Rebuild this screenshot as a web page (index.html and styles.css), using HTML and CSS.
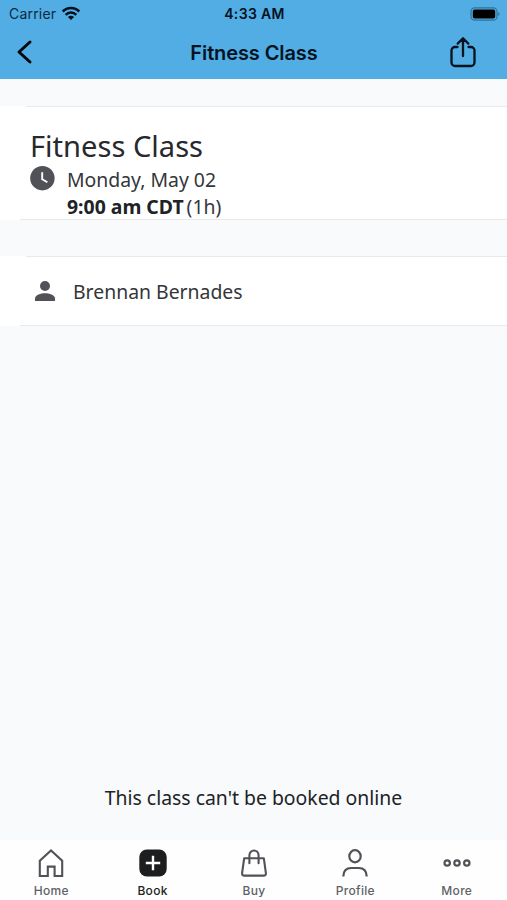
FILE: index.html
```html
<!DOCTYPE html>
<html lang="en">
<head>
<meta charset="utf-8">
<title>Fitness Class</title>
<link rel="stylesheet" href="styles.css">
</head>
<body>
<div class="app">
  <header class="header">
    <div class="status">
      <div class="carrier"><span>Carrier</span>
        <svg width="20" height="16" viewBox="0 0 20 16" fill="none" stroke="#02111d" stroke-width="2.6"><path d="M1.700 5.500C6.300.8 13.700.8 18.300 5.500M4.700 8.800c3-3 7.600-3 10.600 0"/><path d="M6.900 10.900c1.800-1.700 4.400-1.700 6.200 0L10 14z" fill="#02111d" stroke="none"/></svg>
      </div>
      <div class="time">4:33 AM</div>
      <svg class="battery" width="30" height="14" viewBox="0 0 30 14"><rect x="1" y=".8" width="26" height="12.400" rx="3.800" fill="none" stroke="#347197" stroke-width="1.200"/><rect x="2.800" y="2.600" width="22.400" height="8.800" rx="2" fill="#000"/><path d="M28.200 5v4c1.700-.6 1.700-3.400 0-4z" fill="#347197"/></svg>
    </div>
    <nav class="navbar">
      <svg class="back" width="18" height="26" viewBox="0 0 18 26" fill="none" stroke="#04090d" stroke-width="3" stroke-linecap="round" stroke-linejoin="round"><path d="M14 3 3 13l11 10"/></svg>
      <h1>Fitness Class</h1>
      <svg class="share" width="28" height="32" viewBox="0 0 28 32" fill="none" stroke="#04131e" stroke-width="2.300" stroke-linecap="round" stroke-linejoin="round"><path d="M8.500 11H6a3.500 3.500 0 0 0-3.500 3.500v12A3.500 3.500 0 0 0 6 30h16a3.500 3.500 0 0 0 3.500-3.500v-12A3.500 3.500 0 0 0 22 11h-2.500M14 20V3M8.700 7.600 14 2.300l5.300 5.300"/></svg>
    </nav>
  </header>
  <main class="content">
    <section class="card summary">
      <h2>Fitness Class</h2>
      <div class="when">
        <svg width="26" height="26" viewBox="0 0 26 26"><circle cx="13.400" cy="12.200" r="12.200" fill="#505257"/><path d="M13.200 6.200v7l5.200 3" fill="none" stroke="#fff" stroke-width="1.900"/></svg>
        <div class="lines"><div class="date">Monday, May 02</div><div><b>9:00 am CDT</b><span class="length">(1h)</span></div></div>
      </div>
    </section>
    <section class="card person">
      <svg width="20" height="20" viewBox="0 0 20 20" fill="#505257"><circle cx="10" cy="5" r="5"/><path d="M0 20v-2.500C0 14 6 12.200 10 12.200s10 1.800 10 5.300V20z"/></svg>
      <span>Brennan Bernades</span>
    </section>
    <p class="notice">This class can't be booked online</p>
  </main>
  <nav class="tabs">
    <a class="tab"><svg width="30" height="30" viewBox="0 0 30 30" fill="none" stroke="#505257" stroke-width="2.100"><path d="M3.800 28V12.800L15 2.400l11.200 10.400V28h-7.600v-9.400h-6.800V28z"/></svg><span>Home</span></a>
    <a class="tab active"><svg width="30" height="30" viewBox="0 0 30 30"><rect x="1.300" y="1.500" width="27.400" height="27" rx="7.500" fill="#1d1e20"/><path d="M15 7.800v14.400M7.800 15h14.400" stroke="#fff" stroke-width="2.400" fill="none"/></svg><span>Book</span></a>
    <a class="tab"><svg width="30" height="30" viewBox="0 0 30 30" fill="none" stroke="#505257" stroke-width="2.100" stroke-linejoin="round" stroke-linecap="round"><path d="M5.200 10.200h19.600l2.100 14.900q.2 2.500-2.300 2.500H5.400q-2.500 0-2.300-2.500z"/><path d="M10.400 15.200V7.400c0-6.600 9.200-6.600 9.200 0v7.800"/></svg><span>Buy</span></a>
    <a class="tab"><svg width="30" height="30" viewBox="0 0 30 30" fill="none" stroke="#505257" stroke-width="2.200"><ellipse cx="15" cy="8.200" rx="5.700" ry="6.100"/><path d="M3.300 28.600c0-5.600 2.800-8.600 8-8.600h7.400c5.200 0 8 3 8 8.600"/></svg><span>Profile</span></a>
    <a class="tab"><svg width="30" height="30" viewBox="0 0 30 30" fill="none" stroke="#505257" stroke-width="2.200"><circle cx="5.200" cy="15" r="2.700"/><circle cx="15" cy="15" r="2.700"/><circle cx="24.800" cy="15" r="2.700"/></svg><span>More</span></a>
  </nav>
</div>
</body>
</html>
```
FILE: styles.css
```css
* { box-sizing: border-box; }
body { margin: 0; font-family: "Noto Sans", sans-serif; color: #34363a; background: #f8fafc; }
svg { display: block; flex: none; }
h1, h2, p { margin: 0; }
.app { height: 900px; display: flex; flex-direction: column; }
.header { height: 79px; background: #51ade4; font-family: Inter, sans-serif; }
.status { height: 27px; display: grid; grid-template-columns: 1fr auto 1fr; align-items: center; padding: 0 7px 0 9px; color: #04121d; font-size: 14px; }
.carrier { display: flex; align-items: center; gap: 5px; letter-spacing: .2px; color: #0a2a40; }
.time { font-weight: 600; letter-spacing: .35px; }
.battery { justify-self: end; }
.navbar { height: 50px; display: grid; grid-template-columns: 1fr auto 1fr; align-items: center; padding: 0 30px 0 16px; }
.navbar h1 { font-size: 20px; font-weight: 600; letter-spacing: -.1px; color: #04131e; margin: 1px 0 0 15px; }
.share { justify-self: end; }
.content { flex: 1; display: flex; flex-direction: column; padding-top: 27px; }
.card { background: linear-gradient(#e7e9eb, #e7e9eb) 26px 0 / 100% 1px no-repeat, linear-gradient(#e7e9eb, #e7e9eb) 20px 100% / 100% 1px no-repeat, #fff; }
.summary { height: 114px; padding: 20px 30px 0; }
.summary h2 { font-size: 29.100px; font-weight: 400; line-height: 40px; color: #27292c; }
.when { display: flex; gap: 12px; margin-left: -1px; font-size: 19.400px; line-height: 27px; }
.date { white-space: nowrap; }
.lines b { color: #202225; }
.length { margin-left: 3px; }
.person { height: 70px; margin-top: 36px; display: flex; align-items: center; gap: 18px; padding-left: 35px; font-size: 19.400px; }
.notice { margin-top: auto; padding-bottom: 29px; text-align: center; font-size: 19.400px; line-height: 27px; color: #202225; }
.tabs { height: 60px; display: grid; grid-template-columns: repeat(5, 1fr); background: #fefefe; }
.tab { display: flex; flex-direction: column; align-items: center; padding: 8px 0 0 1px; font: 500 12px/16px Inter, sans-serif; letter-spacing: .3px; color: #606267; }
.tab span { margin-top: 5px; }
.active { color: #202225; }
```
